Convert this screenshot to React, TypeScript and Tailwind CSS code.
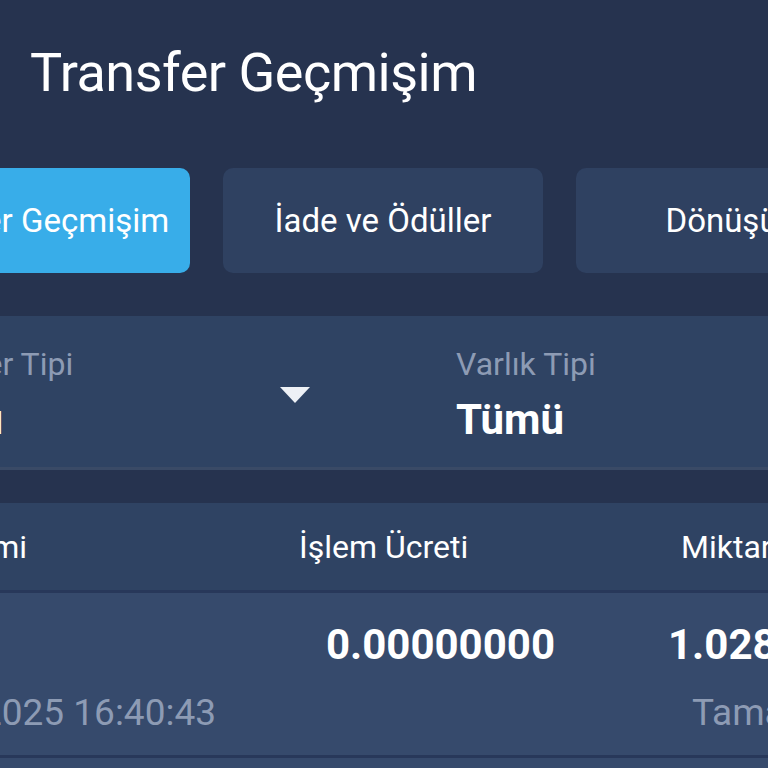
import { Fragment } from "react";

const tabs = [
  { label: "Transfer Geçmişim", active: true },
  { label: "İade ve Ödüller", active: false },
  { label: "Dönüşüm", active: false },
];

function Caret() {
  return (
    <svg width="34" height="20" viewBox="0 0 34 20">
      <path d="M2 2 L32 2 L17 18 Z" fill="#eef1f6" />
    </svg>
  );
}

const App = () => {
  return (
    <div className="w-[768px] h-[768px] overflow-hidden bg-[#26334f] font-['Roboto',sans-serif] text-white">
      {/* header title */}
      <div className="h-[168px] pl-[30px] pt-[46px]">
        <h1 className="text-[54px] leading-none font-normal tracking-[-0.5px]">Transfer Geçmişim</h1>
      </div>

      {/* tabs */}
      <div className="flex gap-[33px] ml-[-130px]">
        {tabs.map((t) => (
          <div
            key={t.label}
            className={
              "w-[320px] h-[105px] shrink-0 rounded-[10px] flex items-center justify-center text-[33px] whitespace-nowrap " +
              (t.active ? "bg-[#38ade9]" : "bg-[#2f4161]")
            }
          >
            {t.label}
          </div>
        ))}
      </div>

      {/* filters */}
      <div className="mt-[43px] h-[154px] bg-[#2f4363] border-b-[3px] border-[#3a4a66]">
        <div className="flex ml-[-105px] h-full">
          <div className="w-[561px] shrink-0 flex items-center">
            <div className="flex flex-col pt-[6px]">
              <span className="text-[32px] text-[#8d9bb4] leading-[40px] whitespace-nowrap">Transfer Tipi</span>
              <span className="text-[42px] font-bold leading-[52px] mt-[10px]">Tümü</span>
            </div>
            <div className="ml-auto mr-[144px] mt-[6px]">
              <Caret />
            </div>
          </div>
          <div className="flex flex-col pt-[6px] justify-center">
            <span className="text-[32px] text-[#8d9bb4] leading-[40px] whitespace-nowrap">Varlık Tipi</span>
            <span className="text-[42px] font-bold leading-[52px] mt-[10px]">Tümü</span>
          </div>
        </div>
      </div>

      {/* table */}
      <div className="mt-[33px]">
        <div className="h-[87px] bg-[#2f4363] flex items-center text-[32px]">
          <div className="w-[27px] shrink-0 flex justify-end whitespace-nowrap">Coin Birimi</div>
          <div className="w-[272px] shrink-0" />
          <div className="w-[382px] shrink-0 whitespace-nowrap">İşlem Ücreti</div>
          <div className="shrink-0 whitespace-nowrap">Miktar</div>
        </div>
        <div className="h-[3px] bg-[#28385a]" />
        {[0, 1].map((i) => (
          <Fragment key={i}>
            <div className="h-[162px] bg-[#364a6c] flex">
              <div className="w-[216px] shrink-0 flex flex-col items-end pt-[28px]">
                <span className="h-[48px]" />
                <span className="text-[37px] text-[#8d9bb4] leading-[48px] mt-[20px] whitespace-nowrap">
                  14.02.2025 16:40:43
                </span>
              </div>
              <div className="w-[339px] shrink-0 flex flex-col items-end pt-[28px]">
                <span className="text-[42px] font-bold leading-[48px] whitespace-nowrap">0.00000000</span>
              </div>
              <div className="shrink-0 flex flex-col items-start pt-[28px] pl-[113px]">
                <span className="text-[42px] font-bold leading-[48px] whitespace-nowrap">1.02800000</span>
                <span className="text-[37px] text-[#8d9bb4] leading-[48px] mt-[20px] ml-[24px] whitespace-nowrap">
                  Tamamlandı
                </span>
              </div>
            </div>
            <div className="h-[3px] bg-[#28385a]" />
          </Fragment>
        ))}
      </div>
    </div>
  );
};

export default App;
